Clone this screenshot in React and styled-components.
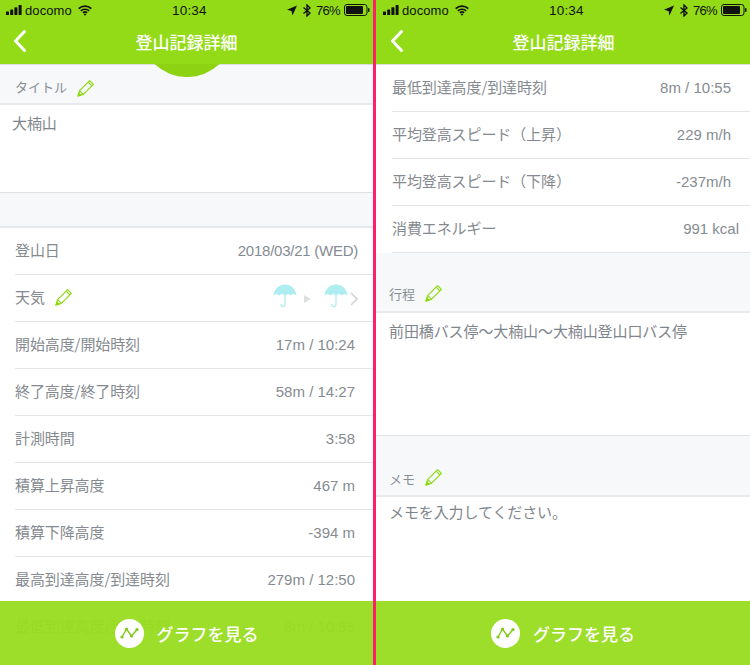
import React from 'react';
import styled, { createGlobalStyle } from 'styled-components';

const Global = createGlobalStyle`
  html, body { margin: 0; padding: 0; background: #fff; }
  #root { width: 750px; height: 665px; overflow: hidden; }
  * { box-sizing: border-box; }
`;
const FONT = `"Liberation Sans", "Noto Sans CJK JP", sans-serif`;
const Page = styled.div`
  display: flex; width: 750px; height: 665px; font-family: ${FONT};
`;
const Phone = styled.div`
  position: relative; width: ${p => p.$w}px; height: 665px; overflow: hidden;
  background: #f6f8fa; display: flex; flex-direction: column; flex: none;
`;
const Divider = styled.div`
  width: 3px; flex: none; background: #fb1f6d;
`;
const Header = styled.header`
  height: 65px; flex: none; background: #92db16; color: #fff; position: relative;
  border-bottom: 1px solid #dcdfe0;
  padding-left: ${p => p.$x}px;
`;
const Status = styled.div`
  height: 20px; display: flex; align-items: center; color: #111; font-size: 13px; position: relative;
  padding-left: 6px;
`;
const Carrier = styled.span`
  margin-left: 3px; letter-spacing: 0.1px;
`;
const Clock = styled.span`
  position: absolute; left: 172px; font-weight: 500; letter-spacing: 0.2px; font-size: 13.5px;
`;
const StatusRight = styled.div`
  position: absolute; left: 287px; display: flex; align-items: center; gap: 6px;
`;
const Percent = styled.span`
  margin-left: -1px; letter-spacing: -0.7px;
`;
const Nav = styled.div`
  height: 44px; display: flex; align-items: center; justify-content: center; position: relative;
  padding-bottom: 2px;
`;
const Title = styled.h1`
  margin: 0; font-size: 17px; font-weight: 500; color: #fff;
  font-family: "Noto Sans CJK JP", sans-serif;
`;
const Back = styled.svg`
  position: absolute; left: 13px; top: 9px; width: 14px; height: 24px;
`;
const Hump = styled.div`
  position: absolute; left: 140px; top: -17px; width: 94px; height: 94px; background: #8ed313;
  border-radius: 50%; clip-path: inset(81px 0 0 0);
`;
const SectionHead = styled.div`
  height: ${p => p.$h}px; flex: none; display: flex; align-items: flex-end; gap: 10px;
  padding: 0 0 ${p => p.$pb}px ${p => p.$x}px; color: #8a8f96;
  font-size: 13px; line-height: 20px; font-family: "Noto Sans CJK JP", sans-serif;
  border-bottom: 2px solid #e8e9eb;
`;
const Pen = styled.svg`
  width: 18px; height: 18px; flex: none; margin-bottom: ${p => p.$lift || 0}px;
`;
const TextBox = styled.div`
  height: ${p => p.$h}px; flex: none; background: #fff; color: #7f858c; font-size: 15px;
  font-family: "Noto Sans CJK JP", sans-serif; padding: ${p => p.$pt}px 0 0 ${p => p.$x}px;
  border-bottom: ${p => p.$noLine ? 'none' : '1px solid #dfe0e2'};
  line-height: 20px; letter-spacing: -0.1px;
`;
const Gap = styled.div`
  height: ${p => p.$h}px; flex: none; background: #f6f8fa;
  border-bottom: 2px solid #e6e7e9;
`;
const Rows = styled.div`
  background: #fff; flex: none;
`;
const Row = styled.div`
  height: 47px; margin-left: ${p => p.$x}px; display: flex; align-items: center; justify-content: space-between;
  border-bottom: 1px solid #e3e4e5; padding-right: ${p => p.$pr}px; color: #858a90; font-size: 15px;
  padding-bottom: 2px; letter-spacing: -0.1px;
  font-family: "Noto Sans CJK JP", sans-serif; line-height: 20px;
`;
const RowLabel = styled.span`
  display: flex; align-items: center; gap: 10px;
`;
const Value = styled.span`
  font-family: "Liberation Sans", sans-serif; font-size: 15px; color: #868b91;
  position: relative; top: 1px; letter-spacing: ${p => p.$tight ? '-0.25px' : '0'};
`;
const Weather = styled.span`
  display: flex; align-items: center; padding-top: 4px;
`;
const UmbrellaIcon = styled.svg`
  margin-bottom: 8px;
`;
const Tri = styled.span`
  width: 0; height: 0; margin: 0 13px 0 7px; border-left: 7px solid #dcdfe0;
  border-top: 4px solid transparent; border-bottom: 4px solid transparent;
`;
const Chevron = styled.svg`
  width: 8px; height: 14px; margin-left: 2px;
`;
const Footer = styled.button`
  position: absolute; left: 0; right: 0; top: 601px; height: 64px; border: 0; padding: 0 0 0 0;
  background: rgba(152, 221, 32, 0.96); color: #fff; display: flex; align-items: center; justify-content: center;
  gap: 13px; font-family: "Noto Sans CJK JP", sans-serif; font-size: 17px; font-weight: 500;
`;
const GraphDisc = styled.span`
  width: 29px; height: 29px; border-radius: 50%; background: #fff; display: flex; align-items: center; justify-content: center;
`;

const PenIcon = ({ lift }) => (
  <Pen $lift={lift} viewBox="0 0 18 18" fill="none" stroke="#8fd814" strokeWidth="1.15" strokeLinejoin="round">
    <path d="M1 17 L2.6 11.6 L12.6 1.6 L16.4 5.4 L6.4 15.4 Z M2.6 11.6 L6.4 15.4 M11.1 3.1 L14.9 6.9" />
    <path d="M1 17 L1.9 14 L4 16.1 Z" fill="#8fd814" />
  </Pen>
);
const Umbrella = () => (
  <UmbrellaIcon width="24" height="25" viewBox="0 0 24 25">
    <path d="M12 1.5 C18 1.5 23 6 23.5 12.5 C21.5 10.5 19.5 10.5 18 12.5 C16 10.5 14 10.5 12 12.5 C10 10.5 8 10.5 6 12.5 C4.5 10.5 2.5 10.5 0.5 12.5 C1 6 6 1.5 12 1.5 Z" fill="#aeeef0" />
    <path d="M12 11 V21 C12 24.5 7.8 24.5 7.8 21" fill="none" stroke="#aeeef0" strokeWidth="1.2" />
  </UmbrellaIcon>
);
const Signal = () => (
  <svg width="16" height="10" viewBox="0 0 16 10" fill="#111">
    <rect x="0" y="6.5" width="3" height="3.5" rx="0.6" /><rect x="4.2" y="4.5" width="3" height="5.5" rx="0.6" />
    <rect x="8.4" y="2.2" width="3" height="7.8" rx="0.6" /><rect x="12.6" y="0" width="3" height="10" rx="0.6" />
  </svg>
);
const WifiIcon = styled.svg`
  margin-left: 6px;
`;
const Wifi = () => (
  <WifiIcon width="14" height="11" viewBox="0 0 16 12" fill="none" stroke="#111" strokeWidth="1.9">
    <path d="M0.8 3.8 C4.8 0 11.2 0 15.2 3.8 M3.2 6.4 C5.8 4 10.2 4 12.8 6.4 M5.6 8.8 C6.9 7.6 9.1 7.6 10.4 8.8" />
    <path d="M8 12 L6.5 10.2 C7.4 9.6 8.6 9.6 9.5 10.2 Z" fill="#111" stroke="none" />
  </WifiIcon>
);
const Arrow = () => (
  <svg width="10" height="11" viewBox="0 0 11 11" fill="#111"><path d="M11 0 L6 11 L5 6 L0 4.6 Z" /></svg>
);
const Bt = () => (
  <svg width="8" height="13" viewBox="0 0 8 13" fill="none" stroke="#111" strokeWidth="1.4"><path d="M0.5 3.5 L7 9 L4 12 V1 L7 4 L0.5 9.5" /></svg>
);
const BatteryIcon = styled.svg`
  margin-left: -2px;
`;
const Battery = () => (
  <BatteryIcon width="26" height="12" viewBox="0 0 26 12">
    <rect x="0.5" y="0.5" width="22.5" height="11" rx="2.5" fill="none" stroke="#111" />
    <rect x="2" y="2" width="17" height="8" rx="1" fill="#111" />
    <rect x="24" y="4" width="1.5" height="4" rx="0.7" fill="#111" />
  </BatteryIcon>
);

function Top({ x }) {
  return (
    <Header $x={x}>
      <Status>
        <Signal /><Carrier>docomo</Carrier><Wifi />
        <Clock>10:34</Clock>
        <StatusRight><Arrow /><Bt /><Percent>76%</Percent><Battery /></StatusRight>
      </Status>
      <Nav>
        <Back viewBox="0 0 14 24" fill="none" stroke="#fff" strokeWidth="3" strokeLinecap="round" strokeLinejoin="round">
          <path d="M11.5 2.5 L2.5 12 L11.5 21.5" />
        </Back>
        <Title>登山記録詳細</Title>
      </Nav>
    </Header>
  );
}
function Graph() {
  return (
    <Footer>
      <GraphDisc>
        <svg width="19" height="14" viewBox="0 0 19 14" fill="none" stroke="#83c91c" strokeWidth="1.4">
          <path d="M2 11 L6.5 3 L11.5 10 L17 3.5" />
          <g fill="#83c91c" stroke="none"><circle cx="2" cy="11" r="1.6" /><circle cx="6.5" cy="3" r="1.6" /><circle cx="11.5" cy="10" r="1.6" /><circle cx="17" cy="3.5" r="1.6" /></g>
        </svg>
      </GraphDisc>
      グラフを見る
    </Footer>
  );
}
const leftRows = [
  ['開始高度/開始時刻', '17m / 10:24'], ['終了高度/終了時刻', '58m / 14:27'], ['計測時間', '3:58'],
  ['積算上昇高度', '467 m'], ['積算下降高度', '-394 m'], ['最高到達高度/到達時刻', '279m / 12:50'],
  ['最低到達高度/到達時刻', '8m / 10:55'],
];
const rightRows = [
  ['最低到達高度/到達時刻', '8m / 10:55', 19], ['平均登高スピード（上昇）', '229 m/h', 19],
  ['平均登高スピード（下降）', '-237m/h', 19], ['消費エネルギー', '991 kcal', 11],
];

export default function App() {
  return (
    <Page>
      <Global />
      <Phone $w={373}>
        <Top x={0} />
        <Hump />
        <SectionHead $h={40} $pb={6} $x={15}>タイトル<PenIcon /></SectionHead>
        <TextBox $h={88} $pt={8} $x={12}>大楠山</TextBox>
        <Gap $h={35} />
        <Rows>
          <Row $x={15} $pr={15}>登山日<Value $tight>2018/03/21 (WED)</Value></Row>
          <Row $x={15} $pr={15}>
            <RowLabel>天気<PenIcon /></RowLabel>
            <Weather><Umbrella /><Tri /><Umbrella /><Chevron viewBox="0 0 8 14" fill="none" stroke="#d2d5d7" strokeWidth="1.6"><path d="M1 1 L7 7 L1 13" /></Chevron></Weather>
          </Row>
          {leftRows.map(([a, b]) => <Row key={a} $x={15} $pr={18}>{a}<Value>{b}</Value></Row>)}
        </Rows>
        <Graph />
      </Phone>
      <Divider />
      <Phone $w={374}>
        <Top x={1} />
        <Rows>
          {rightRows.map(([a, b, r]) => <Row key={a} $x={16} $pr={r}>{a}<Value>{b}</Value></Row>)}
        </Rows>
        <SectionHead $h={60} $pb={7} $x={13}>行程<PenIcon lift={2} /></SectionHead>
        <TextBox $h={123} $pt={8} $x={13}>前田橋バス停〜大楠山〜大楠山登山口バス停</TextBox>
        <SectionHead $h={61} $pb={6} $x={13}>メモ<PenIcon lift={3} /></SectionHead>
        <TextBox $h={168} $pt={5} $x={13} $noLine>メモを入力してください。</TextBox>
        <Graph />
      </Phone>
    </Page>
  );
}
